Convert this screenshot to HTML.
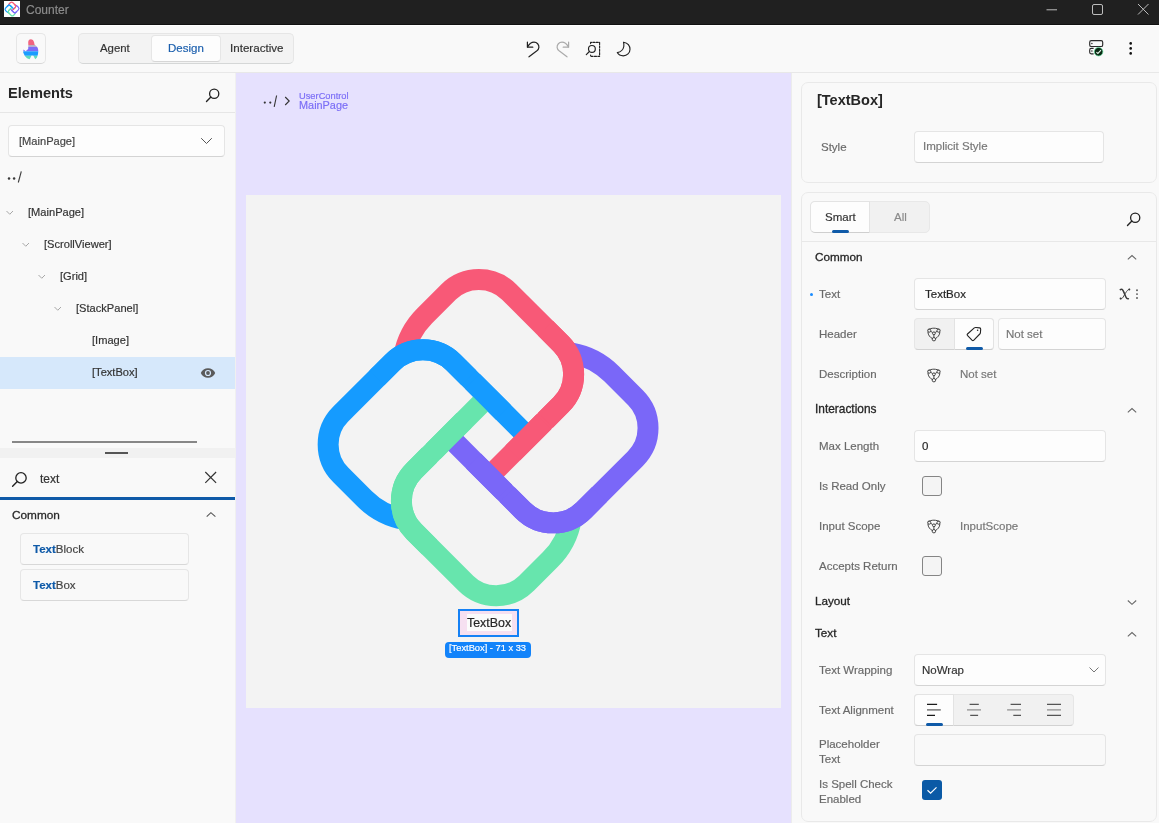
<!DOCTYPE html>
<html><head><meta charset="utf-8">
<style>
*{box-sizing:border-box;margin:0;padding:0}
html,body{width:1159px;height:823px;overflow:hidden;background:#f9f9f9;font-family:"Liberation Sans",sans-serif;font-size:11.5px;color:#1f1f1f}
div{position:absolute}
.t{white-space:nowrap;line-height:1}
svg{position:absolute;overflow:visible}
.box{background:#fdfdfd;border:1px solid #e5e5e5;border-bottom-color:#d4d4d4;border-radius:4px}
.card{background:#f9f9f9;border:1px solid #e9e9e9;border-radius:7px}
.lbl{white-space:nowrap;line-height:1;color:#6a6a6a;font-size:11.5px}
.hdr{white-space:nowrap;line-height:1;color:#262626;font-size:11.7px;-webkit-text-stroke:0.3px #262626}
.cb{width:20px;height:20px;border:1px solid #858585;border-radius:3px;background:#f4f4f4}
.tree{white-space:nowrap;line-height:1;color:#333;font-size:11.1px}
.chev{stroke:#a8a8a8;stroke-width:1;fill:none}
.ic{fill:none;stroke:#222;stroke-width:1.2;stroke-linecap:round;stroke-linejoin:round}
.t,.lbl,.hdr,.tree{will-change:transform}.t,.lbl,.tree{-webkit-text-stroke-width:0.18px}</style></head><body>
<!-- ===== title bar ===== -->
<div style="left:0;top:0;width:1159px;height:24px;background:#202020"></div>
<div style="left:0;top:24px;width:1159px;height:1px;background:#111"></div>
<div style="left:0;top:25px;width:1159px;height:1px;background:#fff"></div>
<div style="left:4px;top:1px;width:16px;height:16px;background:#fff"></div>
<svg style="left:4px;top:1px" width="16" height="16"><use href="#lg" fill="none" stroke-width="28" transform="translate(-12.993 -10.817) scale(0.043)"/></svg>
<div class="t" style="left:26px;top:4px;font-size:12px;color:#8c8c8c">Counter</div>
<svg style="left:1046px;top:9px" width="12" height="2"><path d="M0.5 0.8H11" stroke="#bdbdbd" stroke-width="1"/></svg>
<svg style="left:1091px;top:4px" width="12" height="12"><rect x="1.5" y="0.5" width="10" height="10" rx="1.5" fill="none" stroke="#bdbdbd" stroke-width="1"/></svg>
<svg style="left:1137px;top:3px" width="13" height="13"><path d="M1 1L11.5 11.5M11.5 1L1 11.5" stroke="#bdbdbd" stroke-width="1"/></svg>

<!-- ===== toolbar ===== -->
<div style="left:0;top:72px;width:1159px;height:1px;background:#e8e8e8"></div>
<div class="box" style="left:16px;top:33px;width:30px;height:31px;background:#f9f9f9;border-radius:5px;border-color:#e6e6e6;border-bottom-color:#d8d8d8"></div>
<svg style="left:22px;top:38px" width="18" height="22" viewBox="0 0 18 22">
 <defs><clipPath id="fl"><path d="M6.3 7.5 L6.2 4.2 Q6.3 1.2 9 1.2 Q11.5 1.3 12 4 L12.6 6.8 Q16.3 8.8 16.3 13 Q16.3 16.5 15 19.5 L13.2 21.2 L11.4 17.8 L9.6 17.6 L7.6 21.2 L5 20.2 Q2.4 18 1.2 14.4 L1.5 11.4 L3.6 13.2 L6.2 11 Z"/></clipPath></defs>
 <g clip-path="url(#fl)">
  <rect x="0" y="0" width="18" height="7" fill="#f0647f"/>
  <rect x="0" y="7" width="18" height="1.8" fill="#b8b0c0"/>
  <rect x="0" y="8.8" width="18" height="4.5" fill="#7c6cf6"/>
  <rect x="0" y="13.3" width="18" height="4.5" fill="#1a9cff"/>
  <rect x="0" y="17.8" width="18" height="4.5" fill="#5fd9bc"/>
 </g>
</svg>
<div style="left:78px;top:33px;width:216px;height:31px;background:#f3f3f3;border:1px solid #e6e6e6;border-bottom-color:#d5d7d7;border-radius:5px"></div>
<div class="box" style="left:151px;top:35px;width:70px;height:27px;background:#fdfdfd;border-color:#e6e6e6;border-bottom-color:#d6d6d6"></div>
<div class="t" style="left:100px;top:43px;font-size:11.4px;color:#333">Agent</div>
<div class="t" style="left:168px;top:43px;font-size:11.5px;color:#1b5fad">Design</div>
<div class="t" style="left:229.5px;top:42.4px;font-size:11.6px;color:#333">Interactive</div>
<!-- undo redo inspect moon -->
<svg style="left:524px;top:40px" width="18" height="18" viewBox="0 0 18 18" class="ic">
 <path d="M3.4 2 V7.2 H8.8"/><path d="M3.6 6.9 C5.5 3.6 7.8 2.2 10 2.2 C13 2.2 15.1 4.6 14.9 7.4 C14.8 8.9 14 10 12.6 11.1 L5 16.8"/>
</svg>
<svg style="left:554px;top:40px" width="18" height="18" viewBox="0 0 18 18" class="ic" style="stroke:#a9a9a9">
 <path d="M14.6 2 V7.2 H9.2" stroke="#aaa"/><path d="M14.4 6.9 C12.5 3.6 10.2 2.2 8 2.2 C5 2.2 2.9 4.6 3.1 7.4 C3.2 8.9 4 10 5.4 11.1 L13 16.8" stroke="#aaa"/>
</svg>
<svg style="left:584px;top:40px" width="18" height="18" viewBox="0 0 18 18" class="ic">
 <path d="M6.6 3.6 V2.4 H15.6 V16.3 H6.6 V15" stroke-dasharray="2.1 1.3" stroke-width="1.15"/>
 <circle cx="7.9" cy="8.9" r="3.4" fill="#f9f9f9"/><path d="M5.4 11.5 L2.3 14.6"/>
</svg>
<svg style="left:615px;top:40px" width="18" height="18" viewBox="0 0 18 18" class="ic">
 <path d="M8.5 2.2 C12.5 3 15 6 15 9.3 C15 13 12 15.8 8.3 15.8 C5.8 15.8 3.3 14.5 2.3 12.6 C5.5 12 8.2 9.8 8.8 6.5 C9 5 8.9 3.5 8.5 2.2 Z" stroke-width="1.15"/>
</svg>
<!-- server status icon -->
<svg style="left:1088px;top:39px" width="18" height="20" viewBox="0 0 18 20">
 <rect x="1.7" y="1.6" width="13" height="5.9" rx="1.6" fill="none" stroke="#2a2a2a" stroke-width="1.15"/>
 <circle cx="3.9" cy="4.5" r="0.75" fill="#2a2a2a"/>
 <path d="M5.6 9.4 H3.2 A1.5 1.5 0 0 0 1.7 10.9 V13.3 A1.5 1.5 0 0 0 3.2 14.8 H5.6" fill="none" stroke="#2a2a2a" stroke-width="1.15"/>
 <circle cx="3.9" cy="12.1" r="0.75" fill="#2a2a2a"/>
 <circle cx="10.6" cy="12.7" r="4.3" fill="#0b2a14" stroke="#6ae6a8" stroke-width="0.7"/>
 <path d="M8.4 13.1 L9.9 14.5 L13 11.2" fill="none" stroke="#e8f8ee" stroke-width="1.1"/>
</svg>
<svg style="left:1128px;top:41px" width="6" height="16"><circle cx="2.7" cy="2.4" r="1.3" fill="#111"/><circle cx="2.7" cy="7.4" r="1.3" fill="#111"/><circle cx="2.7" cy="12.4" r="1.3" fill="#111"/></svg>

<!-- ===== LEFT PANEL ===== -->
<div class="t" style="left:8px;top:85.5px;font-size:14.6px;font-weight:bold;color:#262626;-webkit-text-stroke-width:0">Elements</div>
<svg style="left:204px;top:86px" width="18" height="18" viewBox="0 0 18 18" class="ic" ><circle cx="10.2" cy="7.8" r="4.6" stroke-width="1.3"/><path d="M6.9 11.1 L2.5 15.5" stroke-width="1.4"/></svg>
<div style="left:0;top:112px;width:236px;height:1px;background:#e6e6e6"></div>
<div class="box" style="left:8px;top:125px;width:217px;height:32px"></div>
<div class="tree" style="left:19px;top:136px;color:#444">[MainPage]</div>
<svg style="left:199px;top:135px" width="16" height="12"><path d="M2.2 3.2 L7.5 8.5 L12.8 3.2" fill="none" stroke="#555" stroke-width="1"/></svg>
<svg style="left:0;top:165px" width="30" height="22"><circle cx="9" cy="13.6" r="1.25" fill="#3a3a3a"/><circle cx="14.1" cy="13.6" r="1.25" fill="#3a3a3a"/><path d="M21.3 6.3 L18.3 17.5" stroke="#3a3a3a" stroke-width="1.1"/></svg>

<!-- tree -->
<svg style="left:0;top:200px" width="80" height="120" class="chev">
 <path d="M6.5 11 L9.75 14.25 L13 11"/><path d="M22.5 43 L25.75 46.25 L29 43"/><path d="M38.5 75 L41.75 78.25 L45 75"/><path d="M54.5 107 L57.75 110.25 L61 107"/>
</svg>
<div class="tree" style="left:28px;top:207px">[MainPage]</div>
<div class="tree" style="left:44px;top:239px">[ScrollViewer]</div>
<div class="tree" style="left:60px;top:271px">[Grid]</div>
<div class="tree" style="left:76px;top:303px">[StackPanel]</div>
<div class="tree" style="left:92px;top:335px">[Image]</div>
<div style="left:0;top:357px;width:235px;height:32px;background:#d6e8fb"></div>
<div class="tree" style="left:92px;top:367px">[TextBox]</div>
<svg style="left:200px;top:367px" width="16" height="12" viewBox="0 0 16 12">
 <path d="M0.8 6 C3 -0.4 13 -0.4 15.2 6 C13 12.4 3 12.4 0.8 6Z" fill="#5a5a5a"/><circle cx="8" cy="6" r="3.1" fill="#d6e8fb"/><circle cx="8" cy="6" r="1.9" fill="#5a5a5a"/>
</svg>
<div style="left:11.5px;top:441px;width:185px;height:2px;background:#878787"></div>
<div style="left:0;top:448px;width:235px;height:10px;background:#f1f1f1"></div>
<div style="left:104.5px;top:452px;width:23px;height:1.6px;background:#555"></div>
<svg style="left:10px;top:470px" width="18" height="18" viewBox="0 0 18 18" class="ic"><circle cx="11" cy="7.9" r="5.2" stroke-width="1.3"/><path d="M7.3 11.6 L2.6 16.3" stroke-width="1.4"/></svg>
<div class="t" style="left:40px;top:473px;font-size:12px;color:#333">text</div>
<svg style="left:203px;top:470px" width="16" height="16"><path d="M2.3 2 L13.1 12.8 M13.1 2 L2.3 12.8" stroke="#333" stroke-width="1.2" fill="none"/></svg>
<div style="left:0;top:497px;width:235px;height:2.5px;background:#0f5aa8"></div>
<div class="t" style="left:12px;top:510px;font-size:11.8px;color:#2a2a2a;-webkit-text-stroke:0.3px #2a2a2a">Common</div>
<svg style="left:204px;top:509px" width="14" height="10"><path d="M2.7 7.7 L6.9 3.7 L11.4 7.7" stroke="#555" stroke-width="1.05" fill="none"/></svg>
<div class="box" style="left:20px;top:533px;width:169px;height:32px;background:#f9f9f9;border-color:#e6e6e6;border-bottom-color:#d8d8d8"></div>
<div class="box" style="left:20px;top:569px;width:169px;height:32px;background:#f9f9f9;border-color:#e6e6e6;border-bottom-color:#d8d8d8"></div>
<div class="t" style="left:33px;top:544px;font-size:11.5px;color:#444"><b style="color:#0f5aa8">Text</b>Block</div>
<div class="t" style="left:33px;top:580px;font-size:11.5px;color:#444"><b style="color:#0f5aa8">Text</b>Box</div>

<!-- ===== CANVAS ===== -->
<div style="left:236px;top:73px;width:555px;height:750px;background:#e6e1fe"></div>
<div style="left:791px;top:73px;width:1px;height:750px;background:#ececec"></div>
<div style="left:235px;top:73px;width:1px;height:750px;background:#f0f0f0"></div>
<div style="left:246px;top:195px;width:535px;height:513px;background:#f3f3f3"></div>

<!-- logo -->
<svg width="1159" height="823" style="left:0;top:0" fill="none" stroke-width="20.95"><g id="lg"><path transform="translate(478.84 374.23) rotate(45)" stroke="#f85977" d="M-66.08 40.02A75 75 0 0 1 -79.64 -3L-79.64 -36.56A43.08 43.08 0 0 1 -36.56 -79.64L36.56 -79.64A43.08 43.08 0 0 1 79.64 -36.56L79.64 65.11"/><path transform="translate(422.92 444.45) rotate(-45)" stroke="#159bff" d="M-66.08 40.02A75 75 0 0 1 -79.64 -3L-79.64 -36.56A43.08 43.08 0 0 1 -36.56 -79.64L36.56 -79.64A43.08 43.08 0 0 1 79.64 -36.56L79.64 69.53"/><path transform="translate(496.19 501.02) rotate(-135)" stroke="#67e5ad" d="M-66.08 40.02A75 75 0 0 1 -79.64 -3L-79.64 -36.56A43.08 43.08 0 0 1 -36.56 -79.64L36.56 -79.64A43.08 43.08 0 0 1 79.64 -36.56L79.64 67.83"/><path transform="translate(553.25 428.09) rotate(135)" stroke="#7a67f8" d="M-66.08 40.02A75 75 0 0 1 -79.64 -3L-79.64 -36.56A43.08 43.08 0 0 1 -36.56 -79.64L36.56 -79.64A43.08 43.08 0 0 1 79.64 -36.56L79.64 68.42"/><path transform="translate(478.84 374.23) rotate(45)" stroke="#f85977" d="M14.56 -79.64L36.56 -79.64A43.08 43.08 0 0 1 79.64 -36.56L79.64 -14.56M79.64 -12.45L79.64 31.55"/><path transform="translate(422.92 444.45) rotate(-45)" stroke="#159bff" d="M14.56 -79.64L36.56 -79.64A43.08 43.08 0 0 1 79.64 -36.56L79.64 -14.56M79.64 -9.83L79.64 34.17"/><path transform="translate(496.19 501.02) rotate(-135)" stroke="#67e5ad" d="M14.56 -79.64L36.56 -79.64A43.08 43.08 0 0 1 79.64 -36.56L79.64 -14.56M79.64 -9.72L79.64 34.28"/><path transform="translate(553.25 428.09) rotate(135)" stroke="#7a67f8" d="M14.56 -79.64L36.56 -79.64A43.08 43.08 0 0 1 79.64 -36.56L79.64 -14.56M79.64 -10.94L79.64 33.06"/></g></svg>
<!-- selected textbox -->
<div style="left:457.5px;top:609px;width:61px;height:28px;border:2px solid #1581f5;background:#f6e0f1"></div>
<div style="left:467px;top:614px;width:45px;height:17px;background:#fbfbfb"></div>
<div class="t" style="left:467px;top:617px;font-size:12.4px;color:#262626">TextBox</div>
<div style="left:445px;top:641.5px;width:86px;height:16px;background:#1283fa;border-radius:4px"></div>
<div class="t" style="left:449px;top:643.5px;font-size:9.3px;color:#fff">[TextBox] - 71 x 33</div>
<svg style="left:262px;top:94px" width="30" height="16">
 <circle cx="2.8" cy="8.6" r="1.1" fill="#333"/><circle cx="8.3" cy="8.6" r="1.1" fill="#333"/>
 <path d="M14.6 1.5 L12.2 12.8" stroke="#333" stroke-width="1.1"/>
 <path d="M23.2 3 L27.2 7 L23.2 11" stroke="#333" stroke-width="1.1" fill="none"/>
</svg>
<div class="t" style="left:299px;top:92px;font-size:9.3px;color:#7b6ef6">UserControl</div>
<div class="t" style="left:299px;top:100px;font-size:10.9px;color:#7b6ef6">MainPage</div>

<!-- ===== RIGHT PANEL ===== -->
<div class="card" style="left:801px;top:82px;width:356px;height:101px"></div>
<div class="t" style="left:817px;top:93px;font-size:14.5px;font-weight:bold;color:#262626;-webkit-text-stroke-width:0">[TextBox]</div>
<div class="lbl" style="left:821px;top:142px">Style</div>
<div class="box" style="left:914px;top:131px;width:190px;height:32px"></div>
<div class="t" style="left:923px;top:141px;font-size:11.5px;color:#777">Implicit Style</div>

<div class="card" style="left:801px;top:192px;width:356px;height:630px"></div>
<div style="left:810px;top:201px;width:120px;height:32px;background:#f1f1f1;border:1px solid #e8e8e8;border-radius:5px"></div>
<div class="box" style="left:810px;top:201px;width:60px;height:32px;border-radius:5px 0 0 5px;border-color:#e3e3e3;border-bottom-color:#cfcfcf"></div>
<div style="left:832px;top:230px;width:17px;height:3px;background:#0f5aa8;border-radius:2px"></div>
<div class="t" style="left:825px;top:212px;font-size:11.5px;color:#333">Smart</div>
<div class="t" style="left:894px;top:212px;font-size:11.5px;color:#8a8a8a">All</div>
<svg style="left:1125px;top:209.6px" width="18" height="18" viewBox="0 0 18 18" class="ic"><circle cx="10.2" cy="7.8" r="4.6" stroke-width="1.3"/><path d="M6.9 11.1 L2.5 15.5" stroke-width="1.4"/></svg>
<div style="left:802px;top:241px;width:354px;height:1px;background:#e8e8e8"></div>

<div class="hdr" style="left:814.5px;top:251.2px">Common</div>
<svg style="left:1125px;top:252.2px" width="14" height="10"><path d="M2.8 7.3 L7 3.5 L11.2 7.3" stroke="#666" stroke-width="1.05" fill="none"/></svg>
<div style="left:810px;top:293px;width:3.4px;height:3.4px;border-radius:50%;background:#1a8cff"></div>
<div class="lbl" style="left:818.5px;top:289px">Text</div>
<div class="box" style="left:914px;top:278px;width:192px;height:32px"></div>
<div class="t" style="left:925px;top:289px;font-size:11.5px;color:#262626">TextBox</div>
<svg style="left:1118px;top:287px" width="14" height="14"><path d="M2.3 2.6 C3.6 1.6 4.6 2.2 5.6 4.6 L8 10.2 C8.6 11.6 9.4 12 10.4 11.7" stroke="#3a3a3a" stroke-width="1.5" fill="none" stroke-linecap="round"/><path d="M11.7 2.2 C10.2 2.4 9.2 3.3 7.2 6.6 L5 10.3 C4.4 11.4 3.4 11.9 2.1 11.8" stroke="#3a3a3a" stroke-width="0.9" fill="none"/><circle cx="11.3" cy="2.5" r="1" fill="#3a3a3a"/><circle cx="2.6" cy="11.6" r="1" fill="#3a3a3a"/></svg>
<svg style="left:1135px;top:288px" width="4" height="14"><circle cx="2" cy="2.2" r="0.95" fill="#555"/><circle cx="2" cy="6.1" r="0.95" fill="#555"/><circle cx="2" cy="10" r="0.95" fill="#555"/></svg>

<div class="lbl" style="left:818.5px;top:329px">Header</div>
<div style="left:914px;top:318px;width:80px;height:32px;background:#f1f1f1;border:1px solid #e6e6e6;border-bottom-color:#d2d2d2;border-radius:4px"></div>
<div class="box" style="left:954px;top:318px;width:40px;height:32px;border-radius:0 4px 4px 0;border-color:#e3e3e3;border-bottom-color:#cfcfcf"></div>
<div style="left:966px;top:346.5px;width:17px;height:3px;background:#0f5aa8;border-radius:2px"></div>
<svg style="left:926px;top:327px" width="16" height="15" viewBox="0 0 16 15" fill="none" stroke="#444" stroke-width="1">
 <path d="M2.3 2.9 C5 0.6 10.8 0.6 13.5 2.9"/><path d="M1.9 4.9 C2 8.2 4.2 10.4 6.3 11.5M13.9 4.9 C13.8 8.2 11.6 10.4 9.5 11.5"/>
 <circle cx="3.2" cy="3.6" r="1.6"/><circle cx="12.6" cy="3.6" r="1.6"/><circle cx="7.9" cy="12.2" r="1.7"/><circle cx="7.9" cy="6.3" r="1.4"/>
 <path d="M7.9 7.7 V10.5M4.7 4.3 L6.6 5.5M11.1 4.3 L9.2 5.5"/>
</svg>
<svg style="left:965px;top:325px" width="18" height="17" viewBox="0 0 18 17" fill="none" stroke="#222" stroke-width="1.1" stroke-linejoin="round">
 <path d="M7.2 15.3 L2.4 10.4 Q1.8 9.7 2.5 9 L9.3 2.9 Q10 2.4 11 2.5 L14.6 2.9 Q15.7 3.1 15.7 4.2 L15.4 7.8 Q15.3 8.5 14.8 9 L8.6 15.3 Q7.9 15.9 7.2 15.3 Z"/><circle cx="12.6" cy="5.3" r="0.75" fill="#222" stroke="none"/>
</svg>
<div class="box" style="left:998px;top:318px;width:108px;height:32px"></div>
<div class="t" style="left:1006px;top:329px;font-size:11.5px;color:#777">Not set</div>

<div class="lbl" style="left:818.5px;top:369px">Description</div>
<svg style="left:926px;top:368px" width="16" height="15" viewBox="0 0 16 15" fill="none" stroke="#444" stroke-width="1">
 <path d="M2.3 2.9 C5 0.6 10.8 0.6 13.5 2.9"/><path d="M1.9 4.9 C2 8.2 4.2 10.4 6.3 11.5M13.9 4.9 C13.8 8.2 11.6 10.4 9.5 11.5"/>
 <circle cx="3.2" cy="3.6" r="1.6"/><circle cx="12.6" cy="3.6" r="1.6"/><circle cx="7.9" cy="12.2" r="1.7"/><circle cx="7.9" cy="6.3" r="1.4"/>
 <path d="M7.9 7.7 V10.5M4.7 4.3 L6.6 5.5M11.1 4.3 L9.2 5.5"/>
</svg>
<div class="t" style="left:960px;top:369px;font-size:11.5px;color:#777">Not set</div>

<div class="hdr" style="left:814.5px;top:403.6px;font-size:11.9px">Interactions</div>
<svg style="left:1125px;top:404.6px" width="14" height="10"><path d="M2.8 7.3 L7 3.5 L11.2 7.3" stroke="#666" stroke-width="1.05" fill="none"/></svg>
<div class="lbl" style="left:818.5px;top:441px">Max Length</div>
<div class="box" style="left:914px;top:430px;width:192px;height:32px"></div>
<div class="t" style="left:922px;top:441px;font-size:11.5px;color:#262626">0</div>
<div class="lbl" style="left:818.5px;top:481px">Is Read Only</div>
<div class="cb" style="left:922px;top:476px"></div>
<div class="lbl" style="left:818.5px;top:521px">Input Scope</div>
<svg style="left:926px;top:519px" width="16" height="15" viewBox="0 0 16 15" fill="none" stroke="#444" stroke-width="1">
 <path d="M2.3 2.9 C5 0.6 10.8 0.6 13.5 2.9"/><path d="M1.9 4.9 C2 8.2 4.2 10.4 6.3 11.5M13.9 4.9 C13.8 8.2 11.6 10.4 9.5 11.5"/>
 <circle cx="3.2" cy="3.6" r="1.6"/><circle cx="12.6" cy="3.6" r="1.6"/><circle cx="7.9" cy="12.2" r="1.7"/><circle cx="7.9" cy="6.3" r="1.4"/>
 <path d="M7.9 7.7 V10.5M4.7 4.3 L6.6 5.5M11.1 4.3 L9.2 5.5"/>
</svg>
<div class="t" style="left:960px;top:521px;font-size:11.5px;color:#777">InputScope</div>
<div class="lbl" style="left:818.5px;top:561px">Accepts Return</div>
<div class="cb" style="left:922px;top:556px"></div>

<div class="hdr" style="left:814.5px;top:595.3px">Layout</div>
<svg style="left:1125px;top:597.7px" width="14" height="10"><path d="M2.8 2.5 L7 6.3 L11.2 2.5" stroke="#666" stroke-width="1.05" fill="none"/></svg>
<div class="hdr" style="left:814.5px;top:626.6px">Text</div>
<svg style="left:1125px;top:628.6px" width="14" height="10"><path d="M2.8 7.3 L7 3.5 L11.2 7.3" stroke="#666" stroke-width="1.05" fill="none"/></svg>

<div class="lbl" style="left:818.5px;top:665px">Text Wrapping</div>
<div class="box" style="left:914px;top:654px;width:192px;height:32px"></div>
<div class="t" style="left:922px;top:665px;font-size:11.5px;color:#333">NoWrap</div>
<svg style="left:1088px;top:666px" width="12" height="8"><path d="M1.5 1.5 L6 6 L10.5 1.5" stroke="#777" stroke-width="1" fill="none"/></svg>

<div class="lbl" style="left:818.5px;top:705px">Text Alignment</div>
<div style="left:914px;top:694px;width:160px;height:32px;background:#f1f1f1;border:1px solid #e6e6e6;border-bottom-color:#d2d2d2;border-radius:4px"></div>
<div class="box" style="left:914px;top:694px;width:40px;height:32px;border-radius:4px 0 0 4px;border-color:#e3e3e3;border-bottom-color:#cfcfcf"></div>
<div style="left:926px;top:722.5px;width:17px;height:3px;background:#0f5aa8;border-radius:2px"></div>
<svg style="left:920px;top:700px" width="150" height="20" stroke-width="1.2">
 <path d="M7 4.4H17.1M7 15.4H15" stroke="#1a1a1a"/><path d="M7 9.9H20.8" stroke="#555"/>
 <path d="M49.6 4.4H58.8M50.2 15.4H58.1" stroke="#555"/><path d="M47 9.9H61" stroke="#8a8a8a"/>
 <path d="M90.6 4.4H101M93.3 15.4H101" stroke="#555"/><path d="M87.1 9.9H101" stroke="#8a8a8a"/>
 <path d="M127 4.4H141M127 15.4H141" stroke="#555"/><path d="M127 9.9H141" stroke="#8a8a8a"/>
</svg>

<div class="lbl" style="left:818.5px;top:738.5px">Placeholder</div>
<div class="lbl" style="left:818.5px;top:753.5px">Text</div>
<div class="box" style="left:914px;top:734px;width:192px;height:32px;background:#f9f9f9"></div>
<div class="lbl" style="left:818.5px;top:778.5px">Is Spell Check</div>
<div class="lbl" style="left:818.5px;top:793.5px">Enabled</div>
<div style="left:922px;top:780px;width:20px;height:20px;background:#0b5aa6;border-radius:3px"></div>
<svg style="left:922px;top:780px" width="20" height="20"><path d="M5.5 10.2 L8.6 13.2 L14.5 7.3" stroke="#fff" stroke-width="1.2" fill="none"/></svg>
</body></html>
